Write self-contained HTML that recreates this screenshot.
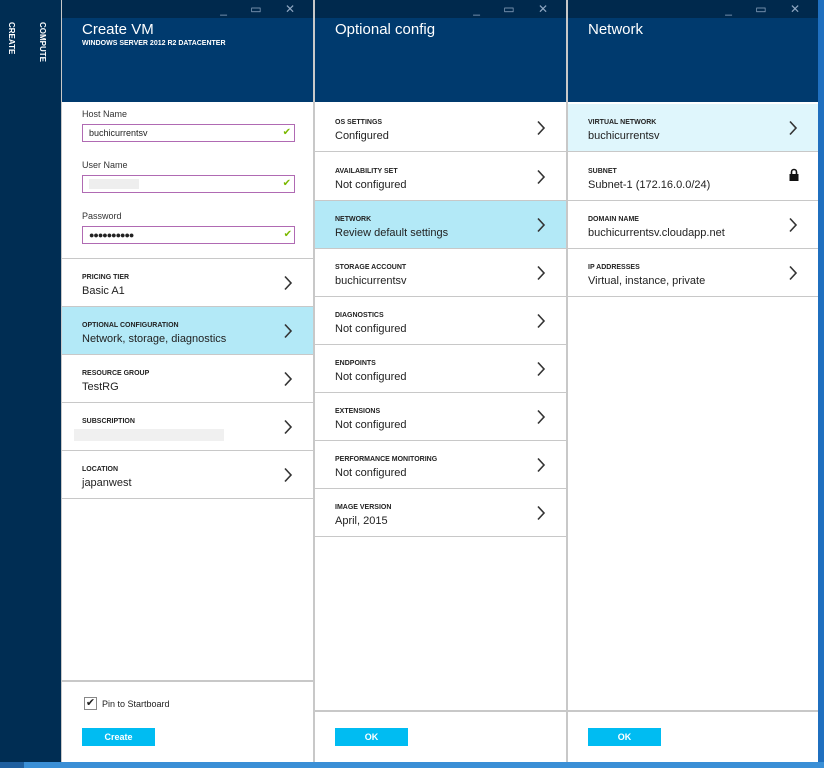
<!DOCTYPE html>
<html><head><meta charset="utf-8"><style>
*{margin:0;padding:0;box-sizing:border-box}
body{width:824px;height:768px;overflow:hidden;background:#c8c8c8;font-family:"Liberation Sans",sans-serif;position:relative;color:#222}
.abs{position:absolute}
.nav{left:0;top:0;width:61px;height:762px;background:#002d53}
.vt{position:absolute;writing-mode:vertical-rl;color:#fff;font-size:8px;font-weight:bold}
.blade{position:absolute;top:0;background:#fff}
.bar{position:absolute;left:0;right:0;top:0;height:18px;background:#00294d}
.head{position:absolute;left:0;right:0;top:18px;height:84px;background:#003a6e}
.title{position:absolute;left:20px;top:20px;color:#fff;font-size:15px}
.sub{position:absolute;left:20px;top:40px;color:#fff;font-size:7px;font-weight:bold}
.ctl{position:absolute;top:2px;right:8px;color:#8fa7c2;font-size:12px;letter-spacing:10px}
.row{position:absolute;left:0;right:0;height:48px;border-bottom:1px solid #c8c8c8}
.row .l{position:absolute;left:20px;top:15px;font-size:7px;font-weight:bold;color:#222}
.row .v{position:absolute;left:20px;top:26px;font-size:11px;color:#222}
.row svg{position:absolute;right:20px;top:16px}
.hl{background:#b3e9f7}
.hl2{background:#dff6fc}
.lbl{position:absolute;left:20px;font-size:9px;color:#333}
.inp{position:absolute;left:20px;width:213px;height:18px;border:1px solid #b06ab3;font-size:9px;padding:3px 6px}
.chk{position:absolute;right:3px;top:2px;color:#7ab800;font-size:10px}
.btn{position:absolute;width:73px;height:18px;background:#00bcf2;color:#fff;font-size:9px;font-weight:bold;text-align:center;line-height:18px}
</style></head><body>
<div class="abs nav">
<div class="vt" style="left:7px;top:22px">CREATE</div>
<div class="vt" style="left:38px;top:22px">COMPUTE</div>
</div>

<svg width="0" height="0" style="position:absolute"><defs><symbol id="ch" viewBox="0 0 10 16"><path d="M2 1.5 L8 8 L2 14.5" fill="none" stroke="#333" stroke-width="1.6"/></symbol></defs></svg>

<!-- blade 1 -->
<div class="blade" style="left:62px;width:251px;height:762px">
<div class="bar"><div class="ctl">_ ▭ ✕</div></div>
<div class="head"><div class="title" style="top:3px">Create VM</div><div class="sub" style="top:22px">WINDOWS SERVER 2012 R2 DATACENTER</div></div>
<div class="lbl" style="top:109px">Host Name</div>
<div class="inp" style="top:124px">buchicurrentsv<span class="chk">✔</span></div>
<div class="lbl" style="top:160px">User Name</div>
<div class="inp" style="top:175px"><span style="display:inline-block;width:50px;height:10px;background:#eee"></span><span class="chk">✔</span></div>
<div class="lbl" style="top:211px">Password</div>
<div class="inp" style="top:226px;letter-spacing:-1px">●●●●●●●●●●<span class="chk">✔</span></div>
<div class="row" style="top:210px;border-bottom:1px solid #c8c8c8;height:49px;background:transparent;pointer-events:none"></div>
<div class="row" style="top:259px"><div class="l">PRICING TIER</div><div class="v">Basic A1</div><svg width="10" height="16"><use href="#ch"/></svg></div>
<div class="row hl" style="top:307px"><div class="l">OPTIONAL CONFIGURATION</div><div class="v">Network, storage, diagnostics</div><svg width="10" height="16"><use href="#ch"/></svg></div>
<div class="row" style="top:355px"><div class="l">RESOURCE GROUP</div><div class="v">TestRG</div><svg width="10" height="16"><use href="#ch"/></svg></div>
<div class="row" style="top:403px"><div class="l">SUBSCRIPTION</div><div class="v"><span style="display:inline-block;width:150px;height:12px;background:#f0f0f0;margin-left:-8px"></span></div><svg width="10" height="16"><use href="#ch"/></svg></div>
<div class="row" style="top:451px"><div class="l">LOCATION</div><div class="v">japanwest</div><svg width="10" height="16"><use href="#ch"/></svg></div>
<div class="abs" style="left:0;right:0;top:680px;height:2px;background:#c8c8c8"></div>
<div class="abs" style="left:22px;top:697px;width:13px;height:13px;border:1px solid #888;font-size:11px;line-height:11px;text-align:center">✔</div>
<div class="abs" style="left:40px;top:699px;font-size:9px">Pin to Startboard</div>
<div class="btn" style="left:20px;top:728px">Create</div>
</div>

<!-- blade 2 -->
<div class="blade" style="left:315px;width:251px;height:762px">
<div class="bar"><div class="ctl">_ ▭ ✕</div></div>
<div class="head"><div class="title" style="top:3px">Optional config</div></div>
<div class="row" style="top:104px"><div class="l">OS SETTINGS</div><div class="v">Configured</div><svg width="10" height="16"><use href="#ch"/></svg></div>
<div class="row" style="top:153px"><div class="l">AVAILABILITY SET</div><div class="v">Not configured</div><svg width="10" height="16"><use href="#ch"/></svg></div>
<div class="row hl" style="top:201px"><div class="l">NETWORK</div><div class="v">Review default settings</div><svg width="10" height="16"><use href="#ch"/></svg></div>
<div class="row" style="top:249px"><div class="l">STORAGE ACCOUNT</div><div class="v">buchicurrentsv</div><svg width="10" height="16"><use href="#ch"/></svg></div>
<div class="row" style="top:297px"><div class="l">DIAGNOSTICS</div><div class="v">Not configured</div><svg width="10" height="16"><use href="#ch"/></svg></div>
<div class="row" style="top:345px"><div class="l">ENDPOINTS</div><div class="v">Not configured</div><svg width="10" height="16"><use href="#ch"/></svg></div>
<div class="row" style="top:393px"><div class="l">EXTENSIONS</div><div class="v">Not configured</div><svg width="10" height="16"><use href="#ch"/></svg></div>
<div class="row" style="top:441px"><div class="l">PERFORMANCE MONITORING</div><div class="v">Not configured</div><svg width="10" height="16"><use href="#ch"/></svg></div>
<div class="row" style="top:489px"><div class="l">IMAGE VERSION</div><div class="v">April, 2015</div><svg width="10" height="16"><use href="#ch"/></svg></div>
<div class="abs" style="left:0;right:0;top:710px;height:2px;background:#c8c8c8"></div>
<div class="btn" style="left:20px;top:728px">OK</div>
</div>

<!-- blade 3 -->
<div class="blade" style="left:568px;width:250px;height:762px">
<div class="bar"><div class="ctl">_ ▭ ✕</div></div>
<div class="head"><div class="title" style="top:3px">Network</div></div>
<div class="row hl2" style="top:104px"><div class="l">VIRTUAL NETWORK</div><div class="v">buchicurrentsv</div><svg width="10" height="16"><use href="#ch"/></svg></div>
<div class="row" style="top:153px"><div class="l">SUBNET</div><div class="v">Subnet-1 (172.16.0.0/24)</div><svg width="12" height="14" style="right:18px;top:15px"><path d="M3.5 6V4a2.5 2.5 0 0 1 5 0v2" fill="none" stroke="#111" stroke-width="1.6"/><rect x="1.5" y="6" width="9" height="7" fill="#111"/></svg></div>
<div class="row" style="top:201px"><div class="l">DOMAIN NAME</div><div class="v">buchicurrentsv.cloudapp.net</div><svg width="10" height="16"><use href="#ch"/></svg></div>
<div class="row" style="top:249px"><div class="l">IP ADDRESSES</div><div class="v">Virtual, instance, private</div><svg width="10" height="16"><use href="#ch"/></svg></div>
<div class="abs" style="left:0;right:0;top:710px;height:2px;background:#c8c8c8"></div>
<div class="btn" style="left:20px;top:728px">OK</div>
</div>

<div class="abs" style="left:818px;top:0;width:6px;height:762px;background:#1f6fbf"></div>
<div class="abs" style="left:0;top:762px;width:824px;height:6px;background:#3a8fd6"></div>
<div class="abs" style="left:0;top:762px;width:24px;height:6px;background:#1f5f9f"></div>
</body></html>
